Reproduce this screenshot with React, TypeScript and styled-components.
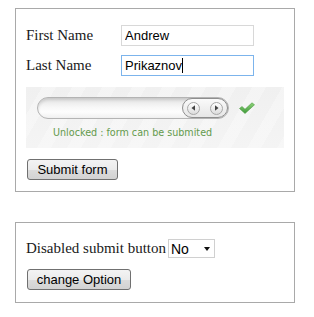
import React from 'react';
import styled, { createGlobalStyle } from 'styled-components';

const Global = createGlobalStyle`
  html, body { margin: 0; padding: 0; background: #fff; }
  body {
    font-family: "Liberation Serif", "Times New Roman", serif;
    font-size: 15px;
    color: #1a1a1a;
  }
`;

const Page = styled.div`
  display: flex;
  flex-direction: column;
  gap: 30px;
  padding: 8px 0 0 15px;
  width: 280px;
`;

const Box = styled.div<{ $top: number; $bottom: number }>`
  border: 1px solid #a9a9a9;
  padding: ${(p) => p.$top}px 10px ${(p) => p.$bottom}px;
  display: flex;
  flex-direction: column;
  align-items: flex-start;
`;

const Rows = styled.div`
  display: flex;
  flex-direction: column;
  gap: 9px;
`;

const Row = styled.div`
  display: grid;
  grid-template-columns: 95px 133px;
  align-items: center;
  height: 21px;
`;

const Label = styled.span`
  line-height: 21px;
`;

const Field = styled.div<{ $ring: string }>`
  position: relative;
  box-sizing: border-box;
  width: 133px;
  height: 21px;
  border: 1px solid ${(p) => p.$ring};
  background: #fff;
  display: flex;
  align-items: center;
  padding: 0 3px;
`;

const TextInput = styled.input`
  appearance: none;
  box-sizing: border-box;
  width: 100%;
  height: 19px;
  margin: 0;
  padding: 0;
  border: none;
  background: transparent;
  font-family: "Liberation Sans", Arial, sans-serif;
  font-size: 13px;
  color: #000;
  outline: none;
`;

const Caret = styled.span`
  position: absolute;
  top: 2px;
  width: 1px;
  height: 15px;
  background: #000;
`;

const Panel = styled.div`
  margin-top: 11px;
  box-sizing: border-box;
  width: 258px;
  height: 61px;
  padding: 10px 0 0 11px;
  background:
    repeating-linear-gradient(120deg, rgba(255,255,255,0) 0 14px, rgba(255,255,255,0.3) 14px 26px),
    linear-gradient(#f0f0f0, #f4f4f4);
`;

const SliderRow = styled.div`
  display: flex;
  align-items: center;
  gap: 10px;
`;

const Track = styled.div`
  box-sizing: border-box;
  width: 192px;
  height: 22px;
  border: 1px solid #b4b4b4;
  border-radius: 11px;
  background: linear-gradient(#e2e2e2, #f7f7f7 45%, #fdfdfd 70%, #f0f0f0);
  box-shadow: inset 0 2px 3px rgba(0, 0, 0, 0.12);
  display: flex;
  justify-content: flex-end;
`;

const Handle = styled.div`
  box-sizing: border-box;
  width: 46px;
  height: 20px;
  border: 1px solid #8e8e8e;
  border-radius: 10px;
  background: linear-gradient(#fafafa, #e6e6e6);
  display: flex;
  align-items: center;
  justify-content: space-between;
  padding: 0 4px;
`;

const ArrowBtn = styled.span`
  box-sizing: border-box;
  width: 13px;
  height: 13px;
  border-radius: 50%;
  border: 1px solid #a8a8a8;
  background: linear-gradient(#ffffff, #dcdcdc);
  display: flex;
  align-items: center;
  justify-content: center;
`;

const Message = styled.div`
  margin: 7px 0 0 16px;
  font-family: "DejaVu Sans", Verdana, sans-serif;
  font-size: 9.6px;
  color: #639a4c;
  line-height: 14px;
`;

const Button = styled.button<{ $width: number }>`
  box-sizing: border-box;
  width: ${(p) => p.$width}px;
  height: 21px;
  margin: 11px 0 0 1px;
  padding: 0;
  border: 1px solid #707070;
  border-radius: 3px;
  background: linear-gradient(#f3f3f3 0%, #ebebeb 50%, #dcdcdc 51%, #d2d2d2 100%);
  font-family: "Liberation Sans", Arial, sans-serif;
  font-size: 13px;
  color: #000;
  line-height: 19px;
`;

const SelectRow = styled.div`
  display: flex;
  align-items: center;
  gap: 2px;
  height: 19px;
`;

const SelectWrap = styled.span`
  position: relative;
  display: block;
  width: 47px;
  height: 19px;
`;

const Select = styled.select`
  box-sizing: border-box;
  appearance: none;
  width: 47px;
  height: 19px;
  margin: 0;
  padding: 0 0 0 2px;
  border: 1px solid #d0d0d0;
  border-radius: 0;
  background: #fff;
  font-family: "Liberation Sans", Arial, sans-serif;
  font-size: 14px;
  color: #000;
  outline: none;
`;

const SelectArrow = styled.span`
  position: absolute;
  right: 5px;
  top: 8px;
  width: 0;
  height: 0;
  border-left: 3.5px solid transparent;
  border-right: 3.5px solid transparent;
  border-top: 4px solid #111;
  pointer-events: none;
`;

const Check = () => (
  <svg width="16" height="12" viewBox="0 0 16 12">
    <defs>
      <linearGradient id="chk" x1="0" y1="0" x2="0" y2="1">
        <stop offset="0" stopColor="#8fd37a" />
        <stop offset="1" stopColor="#3f9a3a" />
      </linearGradient>
    </defs>
    <path d="M0.5 6.5 L3 4.5 L6 7.3 L13 0.8 L15.5 2.8 L6 11.5 Z" fill="url(#chk)" stroke="#4a9a40" strokeWidth="0.6" />
  </svg>
);

const Tri = ({ dir }: { dir: 'l' | 'r' }) => (
  <svg width="5" height="6" viewBox="0 0 5 6">
    {dir === 'l' ? <path d="M0.5 3 L4 0.3 L4 5.7 Z" fill="#444" /> : <path d="M4.5 3 L1 0.3 L1 5.7 Z" fill="#444" />}
  </svg>
);

export default function App() {
  return (
    <>
      <Global />
      <Page>
        <Box $top={16} $bottom={11}>
          <Rows>
            <Row>
              <Label>First Name</Label>
              <Field $ring="#d8d8d8">
                <TextInput defaultValue="Andrew" />
              </Field>
            </Row>
            <Row>
              <Label>Last Name</Label>
              <Field $ring="#7cb4ec">
                <TextInput defaultValue="Prikaznov" />
                <Caret style={{ left: 60 }} />
              </Field>
            </Row>
          </Rows>
          <Panel>
            <SliderRow>
              <Track>
                <Handle>
                  <ArrowBtn><Tri dir="l" /></ArrowBtn>
                  <ArrowBtn><Tri dir="r" /></ArrowBtn>
                </Handle>
              </Track>
              <Check />
            </SliderRow>
            <Message>Unlocked : form can be submited</Message>
          </Panel>
          <Button $width={91}>Submit form</Button>
        </Box>
        <Box $top={16} $bottom={12}>
          <SelectRow>
            <span>Disabled submit button</span>
            <SelectWrap>
              <Select defaultValue="No">
                <option>No</option>
                <option>Yes</option>
              </Select>
              <SelectArrow />
            </SelectWrap>
          </SelectRow>
          <Button $width={104}>change Option</Button>
        </Box>
      </Page>
    </>
  );
}
